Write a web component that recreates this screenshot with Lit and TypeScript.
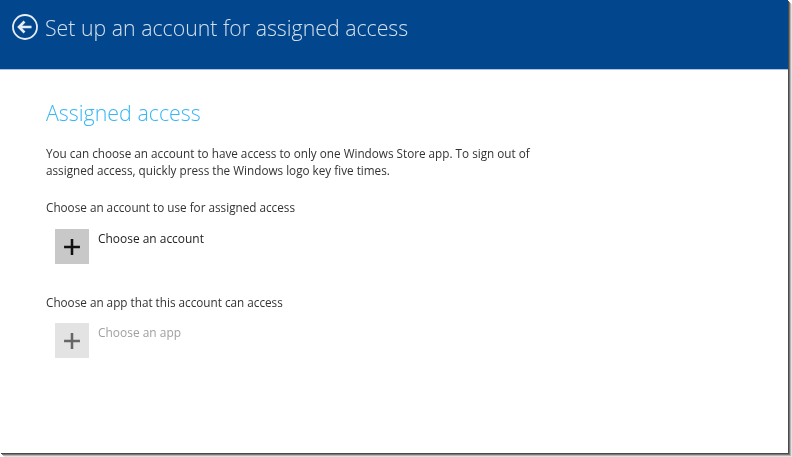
import { LitElement, html, css } from "lit";
import { customElement } from "lit/decorators.js";

@customElement("app-root")
export class AppRoot extends LitElement {
  static styles = css`
    :host { display: block; width: 792px; height: 457px; background: #fff; overflow: hidden;
      font-family: "Open Sans", "Noto Sans", sans-serif; }
    .frame { width: 788px; height: 453px; background: #fff; display: flex; flex-direction: column;
      box-shadow: 1px 1px 0 #4a4a4a, 2px 2px 0 #777, 3px 3px 0 #b5b5b5, 4px 4px 0 #e2e2e2; }
    .header { flex: none; background: #02478e; border-bottom: 1px solid #a9c4e2;
      display: flex; align-items: flex-start; padding: 14px 0 0 12px; box-sizing: border-box; height: 70px; gap: 7px; }
    .back { width: 26px; height: 26px; flex: none; filter: blur(0.3px); }
    .title { color: #d5e0ec; font-size: 21.3px; font-weight: 300; line-height: 30px; margin-top: -1px; filter: blur(0.45px); }
    .main { padding: 28px 0 0 46px; filter: blur(0.45px); }
    h1 { margin: 0; color: #37b6f5; font-size: 21.4px; font-weight: 300; line-height: 30px; }
    .desc { margin: 17px 0 0; width: 510px; color: #333; font-size: 11.72px; line-height: 17px; }
    .label { margin: 0; color: #333; font-size: 11.72px; line-height: 16px; }
    .label.first { margin-top: 20px; }
    .label.second { margin-top: 30px; }
    .row { display: flex; align-items: flex-start; gap: 9px; margin: 14px 0 0 9px; }
    .row.off { margin-top: 13px; }
    .tile { width: 34px; height: 35px; display: flex; align-items: center; justify-content: center; background: #c8c8c8; }
    .tile svg { width: 18px; height: 18px; }
    .tile.off { background: #e3e3e3; }
    .name { font-size: 11.95px; line-height: 16px; color: #222; margin-top: 2px; }
    .name.off { color: #a0a0a0; }
  `;

  private plus(color: string) {
    return html`<svg viewBox="0 0 17 17"><path d="M8.5 1v15M1 8.5h15" stroke=${color} stroke-width="2.4" fill="none"/></svg>`;
  }

  render() {
    return html`
      <div class="frame">
        <header class="header">
          <svg class="back" viewBox="0 0 26 26" fill="none" stroke="#e6edf5">
            <circle cx="13" cy="13" r="12" stroke-width="1.8"/>
            <path d="M19.5 13H7.5M12.5 7.5L7 13l5.5 5.5" stroke-width="2.6"/>
          </svg>
          <div class="title">Set up an account for assigned access</div>
        </header>
        <main class="main">
          <h1>Assigned access</h1>
          <p class="desc">You can choose an account to have access to only one Windows Store app. To sign out of assigned access, quickly press the Windows logo key five times.</p>
          <p class="label first">Choose an account to use for assigned access</p>
          <div class="row">
            <div class="tile">${this.plus("#111")}</div>
            <div class="name">Choose an account</div>
          </div>
          <p class="label second">Choose an app that this account can access</p>
          <div class="row off">
            <div class="tile off">${this.plus("#666")}</div>
            <div class="name off">Choose an app</div>
          </div>
        </main>
      </div>
    `;
  }
}
